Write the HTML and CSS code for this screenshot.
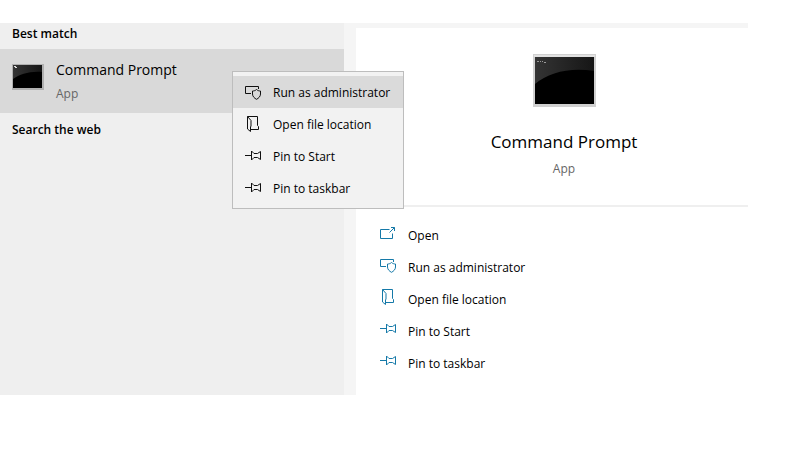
FILE: index.html
```html
<!DOCTYPE html>
<html lang="en">
<head>
  <meta charset="UTF-8">
  <meta name="viewport" content="width=device-width, initial-scale=1.0">
  <link rel="stylesheet" href="styles.css">
  <title>Search</title>
</head>
<body>

  <!-- icons shared by the menu and the action list -->
  <svg class="sprite" aria-hidden="true">
    <symbol id="icon-open" viewBox="0 0 16 16">
      <path d="M9.5 4.5H.5V13.5H12.5V8.5M9.5 7.5L14.5 2.5M11 2.5H14.5V6" />
    </symbol>
    <symbol id="icon-admin" viewBox="0 0 16 16">
      <path d="M6 9.5H.5V2.5H13.5V5" />
      <path d="M11.5 5.5C10.5 6.5 9 7 7.5 7V10C7.5 12.5 9.5 14.3 11.5 15.3C13.5 14.3 15.5 12.5 15.5 10V7C14 7 12.5 6.5 11.5 5.5Z" />
    </symbol>
    <symbol id="icon-folder" viewBox="0 0 16 16">
      <path d="M2.5 .5H12.5V9.5L13.5 10.5V13.5H6M2.5 .5V13L5.5 15.5V11L6 10V4.5L2.5 .5Z" />
    </symbol>
    <symbol id="icon-pin" viewBox="0 0 16 16">
      <path d="M0 7.5H6M6.5 3V12L9 9.5H12.5L15.5 11.5V3.5L12.5 5.5H9L6.5 3" />
    </symbol>
    <symbol id="icon-cmd" viewBox="0 0 63 53">
      <rect width="63" height="53" fill="#d0d0d0" />
      <rect x="1" y="1" width="61" height="2" fill="#e2e2e2" />
      <rect x="2" y="3" width="59" height="47" fill="#000" />
      <path d="M2 3H61V17C38 13 16 18 2 30Z" fill="url(#shine)" />
      <path d="M4 7.5H6M7 7.5H8M9 7.5H10M11 8.5H13" stroke="#999" fill="none" />
    </symbol>
    <defs>
      <linearGradient id="shine" x1="0" y1="0" x2="1" y2="0">
        <stop offset="0" stop-color="#343434" />
        <stop offset="1" stop-color="#161616" />
      </linearGradient>
    </defs>
  </svg>

  <div class="search">
    <section class="results">
      <h2>Best match</h2>
      <div class="result">
        <svg class="result-icon" viewBox="0 0 32 26" aria-hidden="true">
          <rect width="32" height="26" fill="#b0b0b0" />
          <rect x="1" y="1" width="29" height="23" fill="#000" />
          <path d="M1 1H30V8C18 7 8 10 1 15Z" fill="url(#shine)" />
          <path d="M2 2.5H4M3 3.5H5" stroke="#ddd" />
        </svg>
        <div>
          <div class="result-name">Command Prompt</div>
          <div class="kind">App</div>
        </div>

        <div class="menu">
          <button class="active"><svg class="icon"><use href="#icon-admin" /></svg>Run as administrator</button>
          <button><svg class="icon"><use href="#icon-folder" /></svg>Open file location</button>
          <button><svg class="icon"><use href="#icon-pin" /></svg>Pin to Start</button>
          <button><svg class="icon"><use href="#icon-pin" /></svg>Pin to taskbar</button>
        </div>
      </div>
      <h2 class="web">Search the web</h2>
    </section>

    <section class="details">
      <div class="app">
        <svg class="app-icon" aria-hidden="true"><use href="#icon-cmd" /></svg>
        <h1>Command Prompt</h1>
        <div class="kind">App</div>
      </div>
      <div class="actions">
        <button><svg class="icon"><use href="#icon-open" /></svg>Open</button>
        <button><svg class="icon"><use href="#icon-admin" /></svg>Run as administrator</button>
        <button><svg class="icon"><use href="#icon-folder" /></svg>Open file location</button>
        <button><svg class="icon"><use href="#icon-pin" /></svg>Pin to Start</button>
        <button><svg class="icon"><use href="#icon-pin" /></svg>Pin to taskbar</button>
      </div>
    </section>
  </div>

</body>
</html>
```

FILE: styles.css
```css
body {
  font-family: 'Segoe UI', 'Open Sans', sans-serif;
  font-size: 12px;
  margin: 0;
  padding: 23px 0 0;
  background-color: #fff;
  color: #000;
}

.sprite {
  position: absolute;
  width: 0;
  height: 0;
}

.search {
  display: grid;
  grid-template-columns: 356px 1fr;
  margin-right: 52px;
  min-height: 372px;
}

.results {
  background-color: #efefef;
  border-right: 12px solid #f5f5f5;
}

h2 {
  margin: 0;
  padding: 1px 12px 5px;
  font-size: 12px;
  font-weight: 600;
  line-height: 20px;
}

.web {
  padding-top: 7px;
}

.result {
  position: relative;
  display: flex;
  gap: 12px;
  height: 64px;
  padding: 0 12px;
  background-color: #d9d9d9;
}

.result-icon {
  width: 32px;
  height: 26px;
  margin-top: 15px;
}

.result-name {
  margin-top: 9px;
  font-size: 14px;
  line-height: 24px;
}

.kind {
  color: #666;
  font-size: 12px;
  line-height: 24px;
}

button {
  display: flex;
  align-items: center;
  gap: 12px;
  width: 100%;
  height: 32px;
  padding: 0 12px;
  border: none;
  background: none;
  color: #000;
  font-family: inherit;
  font-size: 12px;
  text-align: left;
  white-space: nowrap;
  cursor: pointer;
}

.icon {
  flex: none;
  width: 16px;
  height: 16px;
  fill: none;
  stroke: #111;
}

.menu {
  position: absolute;
  top: 22px;
  left: 232px;
  z-index: 1;
  box-sizing: border-box;
  width: 172px;
  padding: 4px 0;
  border: 1px solid #bdbdbd;
  background-color: #f2f2f2;
}

.menu .active,
.menu button:hover {
  background-color: #dadada;
}

.details {
  border-top: 5px solid #f5f5f5;
}

.app {
  display: flex;
  flex-direction: column;
  align-items: center;
  padding: 26px 0 24px 24px;
  border-bottom: 2px solid #efefef;
}

.app-icon {
  width: 63px;
  height: 53px;
}

h1 {
  margin: 20px 0 0;
  font-size: 17px;
  font-weight: normal;
  line-height: 30px;
}

.actions {
  padding: 12px;
}

.actions .icon {
  margin-bottom: 4px;
  stroke: #1579a8;
}
```
